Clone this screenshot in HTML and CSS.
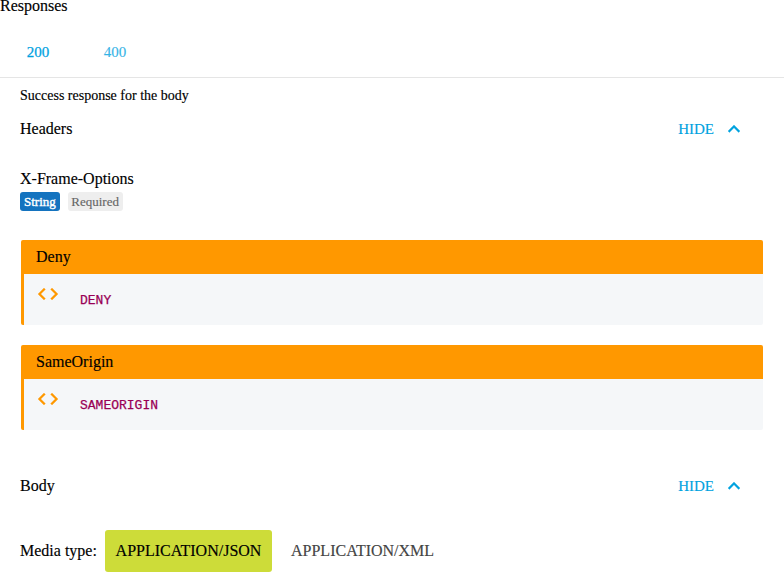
FILE: index.html
```html
<!DOCTYPE html>
<html lang="en">
<head>
<meta charset="utf-8">
<title>Responses</title>
<link rel="stylesheet" href="styles.css">
</head>
<body>
<h2 class="title">Responses</h2>
<nav class="tabs"><a class="tab active">200</a><a class="tab">400</a></nav>
<main class="content">
<p class="description">Success response for the body</p>
<div class="section-head"><span>Headers</span><button class="toggle">HIDE<svg viewBox="0 0 24 24"><path d="M12 8l-6 6 1.41 1.41L12 10.83l4.59 4.58L18 14z"/></svg></button></div>
<div class="property">X-Frame-Options</div>
<div class="badges"><span class="badge type">String</span><span class="badge required">Required</span></div>
<section class="example"><div class="example-title">Deny</div><div class="example-body"><svg viewBox="0 0 24 24"><path d="M9.4 16.6L4.8 12l4.6-4.6L8 6l-6 6 6 6 1.4-1.4zm5.2 0l4.6-4.6-4.6-4.6L16 6l6 6-6 6-1.4-1.4z"/></svg><code>DENY</code></div></section>
<section class="example"><div class="example-title">SameOrigin</div><div class="example-body"><svg viewBox="0 0 24 24"><path d="M9.4 16.6L4.8 12l4.6-4.6L8 6l-6 6 6 6 1.4-1.4zm5.2 0l4.6-4.6-4.6-4.6L16 6l6 6-6 6-1.4-1.4z"/></svg><code>SAMEORIGIN</code></div></section>
<div class="section-head body-head"><span>Body</span><button class="toggle">HIDE<svg viewBox="0 0 24 24"><path d="M12 8l-6 6 1.41 1.41L12 10.83l4.59 4.58L18 14z"/></svg></button></div>
<div class="media"><span class="media-label">Media type:</span><button class="media-button selected">APPLICATION/JSON</button><button class="media-button">APPLICATION/XML</button></div>
</main>
</body>
</html>
```
FILE: styles.css
```css
* { box-sizing: border-box; }
body { margin: 0; height: 584px; overflow: hidden; background: #fff; color: #000; font: 16px/20px "Liberation Serif", serif; -webkit-text-stroke: .15px; }
button { border: 0; padding: 0; background: none; font: inherit; color: inherit; -webkit-text-stroke: inherit; }
.title { margin: 0; height: 16px; font-size: 16px; font-weight: 400; line-height: 12px; }
.tabs { display: flex; height: 62px; padding-top: 10px; border-bottom: 1px solid #e5e5e5; }
.tab { width: 77px; padding-right: 1px; text-align: center; color: #00a2df; font-size: 15px; line-height: 52px; opacity: .8; }
.tab.active { opacity: 1; -webkit-text-stroke: .25px; }
.content { padding: 0 20px; }
.description { margin: 0; padding-top: 8px; font-size: 14px; line-height: 20px; }
.section-head { display: flex; justify-content: space-between; align-items: center; height: 46px; }
.toggle { display: flex; align-items: center; color: #00a2df; font-size: 15px; margin-right: 18px; }
.toggle svg { width: 24px; height: 24px; margin-left: 8px; fill: currentColor; stroke: currentColor; stroke-width: .3; }
.property { margin-top: 17px; line-height: 20px; }
.badges { display: flex; gap: 8px; margin: 3px 0 29px; }
.badge { height: 19px; padding: 0 4px; border-radius: 3px; font-size: 13px; line-height: 20px; }
.type { background: #1473bf; color: #fff; -webkit-text-stroke: .4px; }
.required { padding-left: 3.5px; padding-right: 4.5px; background: #eee; color: #666; }
.example { margin: 0 1px 20px; height: 85px; border-left: 3px solid #ff9800; border-radius: 2px; background: #f5f7f9; overflow: hidden; }
.example-title { height: 34px; padding-left: 12px; line-height: 34px; background: #ff9800; }
.example-body { display: flex; padding: 8px 12px; }
.example-body svg { width: 24px; height: 24px; fill: #ff9800; stroke: #ff9800; stroke-width: .3; }
.example-body code { margin: 9px 0 0 20px; color: #905; font: 13px/20px "Liberation Mono", "Courier New", monospace; -webkit-text-stroke: .25px; }
.body-head { margin-top: 33px; }
.media { display: flex; align-items: center; margin-top: 21px; height: 42px; }
.media-label { width: 85px; }
.media-button { height: 42px; padding: 0 10px; border-radius: 3px; color: #444; }
.media-button.selected { width: 167px; margin-right: 9px; background: #cddc39; color: #000; }
```
